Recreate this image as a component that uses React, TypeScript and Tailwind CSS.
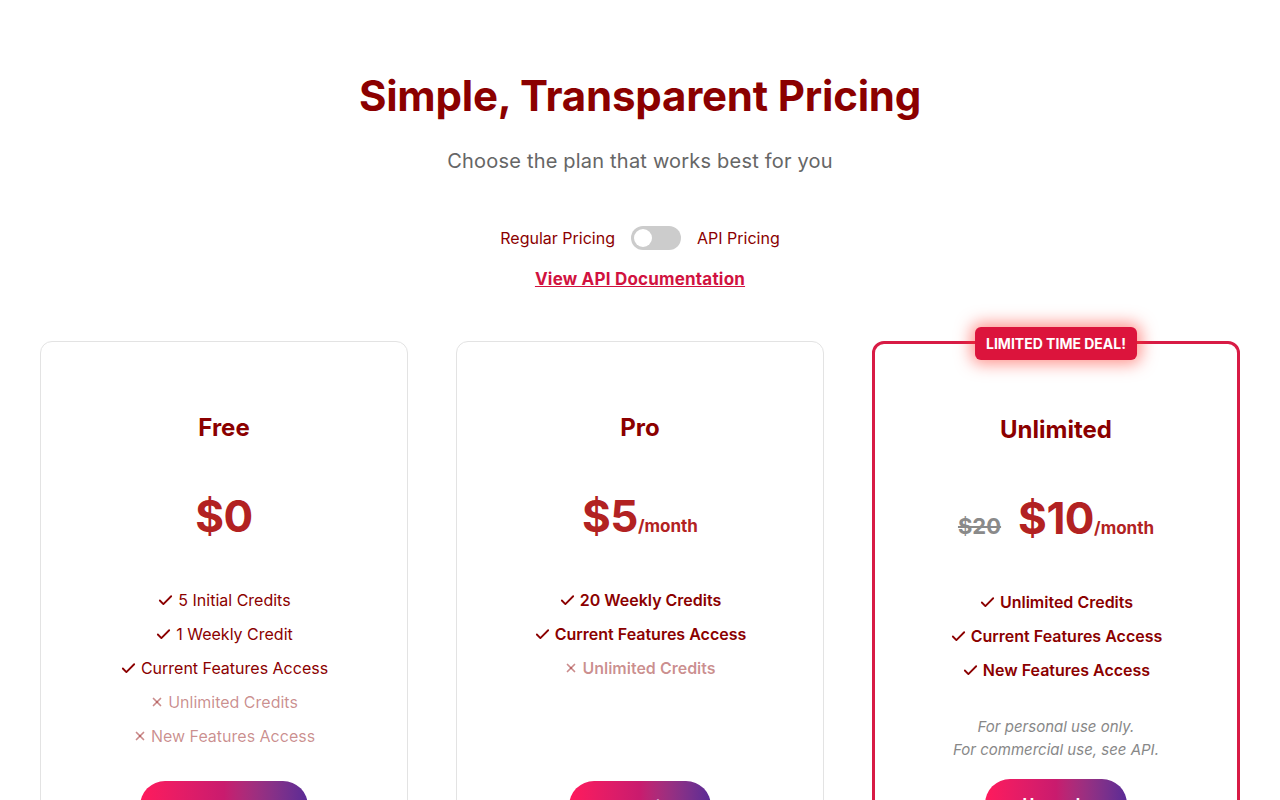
import { Check, X } from "lucide-react";

type Feature = { text: string; on: boolean };

type Plan = {
  name: string;
  price: string;
  old?: string;
  month?: boolean;
  bold: boolean;
  features: Feature[];
  note?: string[];
  cta: string;
  ctaWidth: string;
  featured?: boolean;
};

const PLANS: Plan[] = [
  {
    name: "Free",
    price: "$0",
    bold: false,
    features: [
      { text: "5 Initial Credits", on: true },
      { text: "1 Weekly Credit", on: true },
      { text: "Current Features Access", on: true },
      { text: "Unlimited Credits", on: false },
      { text: "New Features Access", on: false },
    ],
    cta: "Get Started",
    ctaWidth: "w-[168px]",
  },
  {
    name: "Pro",
    price: "$5",
    month: true,
    bold: true,
    features: [
      { text: "20 Weekly Credits", on: true },
      { text: "Current Features Access", on: true },
      { text: "Unlimited Credits", on: false },
    ],
    cta: "Subscribe",
    ctaWidth: "w-[142px]",
  },
  {
    name: "Unlimited",
    price: "$10",
    old: "$20",
    month: true,
    bold: true,
    features: [
      { text: "Unlimited Credits", on: true },
      { text: "Current Features Access", on: true },
      { text: "New Features Access", on: true },
    ],
    note: ["For personal use only.", "For commercial use, see API."],
    cta: "Upgrade",
    ctaWidth: "w-[142px]",
    featured: true,
  },
];

function PlanCard({ plan }: { plan: Plan }) {
  return (
    <div
      className={
        plan.featured
          ? "relative flex flex-col items-center rounded-[12px] border-[3px] border-[#d81b45] bg-white px-6 pt-[70px] pb-10"
          : "relative flex flex-col items-center rounded-[12px] border border-[#e3e3e3] bg-white px-6 pt-[70px] pb-10"
      }
    >
      {plan.featured && (
        <div className="absolute -top-[17px] left-1/2 -translate-x-1/2 whitespace-nowrap rounded-[6px] bg-[#dc143c] px-[11px] py-[6px] text-[14px] font-bold leading-[21px] text-white shadow-[0_0_16px_4px_rgba(255,60,50,0.55)]">
          LIMITED TIME DEAL!
        </div>
      )}
      <h2 className="text-[24px] font-bold leading-[32px] text-[#8b0000]">{plan.name}</h2>
      <div className="mt-[42px] flex h-[60px] items-center">
        <div className="flex items-baseline">
          {plan.old && (
            <span className="mr-[17px] text-[22px] font-bold leading-none text-[#8a8a8a] line-through">
              {plan.old}
            </span>
          )}
          <span className="text-[44px] font-bold leading-none tracking-[-0.5px] text-[#b22222]">
            {plan.price}
          </span>
          {plan.month && (
            <span className="text-[17px] font-bold leading-none text-[#b22222]">/month</span>
          )}
        </div>
      </div>
      <ul className="mt-[42px] mb-4 flex flex-col items-center gap-[10px]">
        {plan.features.map((f) => (
          <li
            key={f.text}
            className={
              "flex items-center gap-[4px] text-[16px] leading-[24px] " +
              (plan.bold ? "font-semibold " : "font-normal ") +
              (f.on ? "text-[#8b0000]" : "text-[#8b0000]/45")
            }
          >
            {f.on ? (
              <Check className="h-[17px] w-[17px]" strokeWidth={2.6} />
            ) : (
              <X className="h-[14px] w-[14px]" strokeWidth={3} />
            )}
            <span>{f.text}</span>
          </li>
        ))}
      </ul>
      {plan.note && (
        <div className="mt-[17px] text-center text-[15px] italic leading-[23px] text-[#888888]">
          {plan.note.map((n) => (
            <p key={n}>{n}</p>
          ))}
        </div>
      )}
      <div className="mt-auto pt-[17px]">
        <button
          className={
            "h-[50px] rounded-full bg-gradient-to-r from-[#ff1a5c] via-[#c91b6e] to-[#5a2a96] text-[16px] font-bold text-white " +
            plan.ctaWidth
          }
        >
          {plan.cta}
        </button>
      </div>
    </div>
  );
}

export default function App() {
  return (
    <div className="min-h-screen bg-white font-['Inter',sans-serif]">
      <div className="mx-auto flex max-w-[1280px] flex-col items-center px-10 pt-[71px] pb-16">
        <h1 className="text-[42px] font-bold leading-[50px] tracking-[-0.2px] text-[#8b0000]">
          Simple, Transparent Pricing
        </h1>
        <p className="mt-[26px] text-[20px] leading-[28px] tracking-[0.2px] text-[#666666]">
          Choose the plan that works best for you
        </p>
        <div className="mt-[51px] flex items-center gap-4 text-[16px] leading-[24px] text-[#8b0000]">
          <span>Regular Pricing</span>
          <button className="flex h-[24px] w-[50px] items-center rounded-full bg-[#cccccc] px-[3px]">
            <span className="h-[18px] w-[18px] rounded-full bg-white" />
          </button>
          <span>API Pricing</span>
        </div>
        <a
          href="#"
          className="mt-[17px] text-[17px] font-bold leading-[24px] tracking-[0.2px] text-[#d1123f] underline"
        >
          View API Documentation
        </a>
        <div className="mt-[50px] grid w-full grid-cols-3 gap-12">
          {PLANS.map((p) => (
            <PlanCard key={p.name} plan={p} />
          ))}
        </div>
      </div>
    </div>
  );
}
